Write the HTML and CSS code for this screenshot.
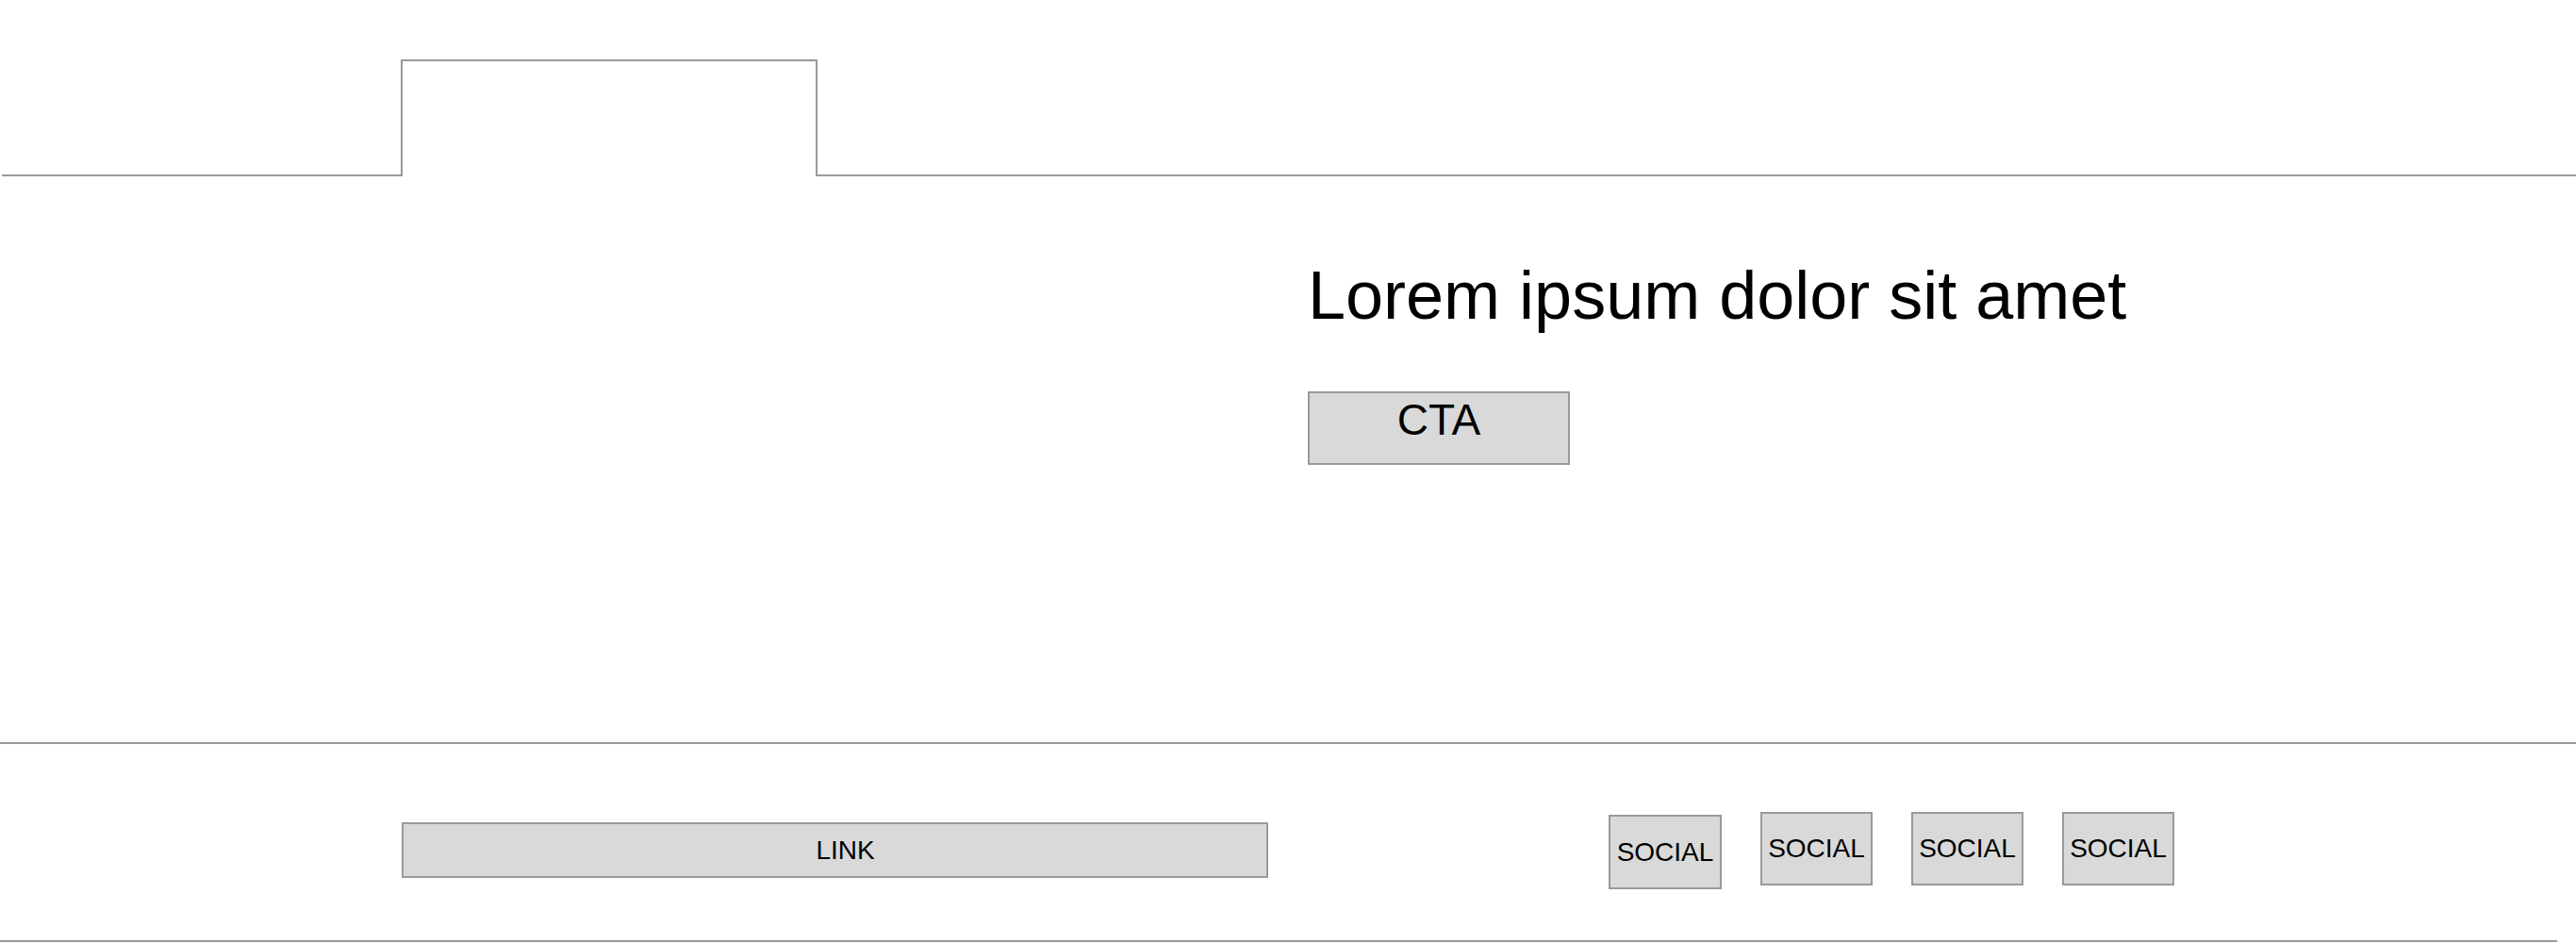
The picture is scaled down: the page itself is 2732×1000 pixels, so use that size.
FILE: index.html
```html
<!DOCTYPE html>
<html lang="en">
<head>
    <meta charset="UTF-8">
    <meta name="viewport" content="width=device-width, initial-scale=1.0">
    <title>Landing wireframe</title>
    <link rel="stylesheet" href="styles.css">
</head>
<body>
    <header class="site-header">
        <div class="header-rule header-rule-left"></div>
        <nav class="nav-tab"></nav>
        <div class="header-rule header-rule-right"></div>
    </header>

    <main class="hero">
        <div class="container hero-grid">
            <div class="hero-media"></div>
            <div class="hero-copy">
                <h1 class="hero-title">Lorem ipsum dolor sit amet</h1>
                <a class="btn-cta" href="#">CTA</a>
            </div>
        </div>
    </main>

    <footer class="site-footer">
        <div class="container footer-grid">
            <a class="footer-link" href="#">LINK</a>
            <div class="social-list">
                <a class="social social-first" href="#">SOCIAL</a>
                <a class="social" href="#">SOCIAL</a>
                <a class="social" href="#">SOCIAL</a>
                <a class="social" href="#">SOCIAL</a>
            </div>
        </div>
    </footer>
    <div class="footer-base"></div>
</body>
</html>
```

FILE: styles.css
```css
* {
    box-sizing: border-box;
}

body {
    margin: 0;
    background-color: #ffffff;
    color: #000000;
    font-family: "Liberation Sans", Arial, sans-serif;
}

a {
    color: #000000;
    text-decoration: none;
}

.container {
    width: 1880px;
    margin: 0 auto;
}

/* header with the nav tab */
.site-header {
    display: flex;
    align-items: flex-end;
    height: 187px;
}

.header-rule {
    height: 2px;
    background-color: #999999;
}

.header-rule-left {
    width: 423px;
    margin-left: 2px;
}

.header-rule-right {
    flex: 1;
}

.nav-tab {
    width: 442px;
    height: 124px;
    border: 2px solid #999999;
    border-bottom: none;
}

/* hero */
.hero {
    height: 600px;
    padding-top: 85px;
}

.hero-grid {
    display: grid;
    grid-template-columns: 1fr 1fr;
    column-gap: 42px;
}

.hero-title {
    margin: 0;
    font-size: 72px;
    font-weight: normal;
    line-height: 1.15;
}

.btn-cta {
    display: block;
    width: 278px;
    height: 78px;
    margin-top: 60px;
    padding-top: 2px;
    border: 2px solid #999999;
    background-color: #d9d9d9;
    font-size: 46px;
    line-height: 1.15;
    text-align: center;
}

/* footer */
.site-footer {
    height: 210px;
    padding-top: 72px;
    border-top: 2px solid #999999;
}

.footer-grid {
    display: grid;
    grid-template-columns: 1fr 1fr;
    column-gap: 42px;
    align-items: start;
}

.footer-link {
    display: flex;
    align-items: center;
    justify-content: center;
    height: 59px;
    margin-top: 11px;
    padding-left: 22px;
    border: 2px solid #999999;
    background-color: #d9d9d9;
    font-size: 28px;
}

.social-list {
    display: flex;
    justify-content: flex-end;
    align-items: flex-start;
    gap: 41px;
}

.social {
    display: flex;
    align-items: center;
    justify-content: center;
    width: 119px;
    height: 78px;
    border: 2px solid #999999;
    background-color: #d9d9d9;
    font-size: 28px;
}

.social-first {
    width: 120px;
    height: 79px;
    margin-top: 3px;
}

.footer-base {
    height: 2px;
    margin-right: 20px;
    background-color: #999999;
}
```
